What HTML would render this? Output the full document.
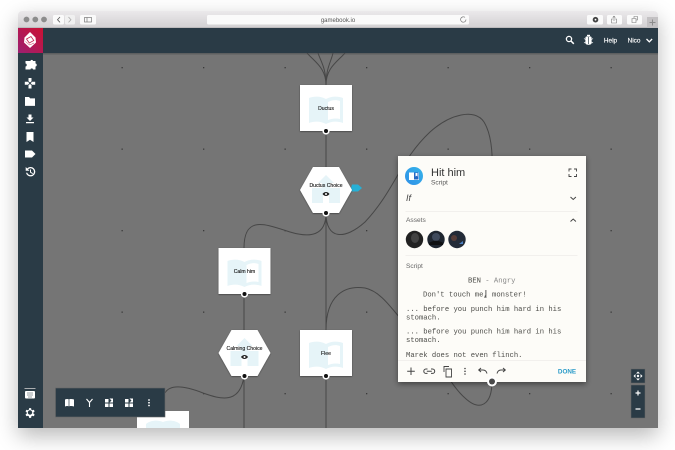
<!DOCTYPE html>
<html><head><meta charset="utf-8"><style>
html,body{margin:0;padding:0;background:#fff;width:675px;height:450px;overflow:hidden}
#win{position:absolute;left:18px;top:11px;width:640px;height:417px;border-radius:4px;box-shadow:0 8px 22px rgba(0,0,0,.28)}
svg{position:absolute;left:0;top:0}
text{font-family:"Liberation Sans",sans-serif}
.m{font-family:"Liberation Mono",monospace;font-size:7.2px;fill:#4c4c48}
.n{font-size:5.100px;text-anchor:middle;fill:#111;stroke:#111;stroke-width:.12px}
</style></head><body>
<div id="win"></div>
<svg width="675" height="450" viewBox="0 0 675 450">
<defs>
<linearGradient id="tb" x1="0" y1="0" x2="0" y2="1"><stop offset="0" stop-color="#ebe9eb"/><stop offset="1" stop-color="#d2d0d2"/></linearGradient>
<linearGradient id="lg" x1="0" y1="1" x2="1" y2="0"><stop offset="0" stop-color="#9c2072"/><stop offset="1" stop-color="#cc1133"/></linearGradient>
<linearGradient id="bl" x1="0" y1="1" x2="1" y2="0"><stop offset="0" stop-color="#2f8fe6"/><stop offset="1" stop-color="#35b4ea"/></linearGradient>
<filter id="ps" x="-20%" y="-20%" width="140%" height="140%"><feDropShadow dx="0" dy="2" stdDeviation="3" flood-color="#000" flood-opacity=".45"/></filter>
<filter id="ns" x="-20%" y="-20%" width="140%" height="140%"><feDropShadow dx="0" dy="0.6" stdDeviation="0.7" flood-color="#000" flood-opacity=".5"/></filter>
<clipPath id="w"><path d="M18 15a4 4 0 0 1 4-4h632a4 4 0 0 1 4 4v413H18z"/></clipPath>
<clipPath id="c"><rect x="43" y="53" width="615" height="375"/></clipPath>
<g id="book"><path d="M-17-11c5-2 12-2 17 1 5-3 12-3 17-1V14c-5-2-12-2-17 1-5-3-12-3-17-1z" fill="#e6f4f8"/><path d="M2-7c4-2 8-2.500 12-1V10c-4-1-8-.5-12 1z" fill="#fff"/></g>
<g id="fork" fill="#e6f4f8"><path d="M0-15l8 8H4v5h10v15H3V4H-3v9h-11V-2H-4v-5h-4z"/></g>
<g id="eye"><path d="M-3.500 0c1.800-2.600 5.200-2.600 7 0-1.800 2.600-5.200 2.600-7 0z" fill="#222"/><circle r="1" fill="#fff"/></g>
<g id="port"><circle r="3.600" fill="#fff"/><circle r="2" fill="#111"/></g>
</defs>

<g clip-path="url(#w)">
<rect x="18" y="11" width="640" height="17" fill="url(#tb)"/>
<rect x="18" y="27" width="640" height="1" fill="#bdbbbd"/>
<circle cx="26.500" cy="19.500" r="2.900" fill="#8c8c8c"/><circle cx="35.300" cy="19.500" r="2.900" fill="#8c8c8c"/><circle cx="44" cy="19.500" r="2.900" fill="#8c8c8c"/>
<rect x="53" y="15" width="11" height="9.500" rx="1.500" fill="#fafafa"/><rect x="65" y="15" width="10" height="9.500" rx="1.500" fill="#f0f0f0"/>
<path d="M60 17l-2.500 2.700 2.500 2.700" fill="none" stroke="#555" stroke-width=".8"/><path d="M68.500 17l2.500 2.700-2.500 2.700" fill="none" stroke="#aaa" stroke-width=".8"/>
<rect x="80" y="15" width="16" height="9.500" rx="1.500" fill="#fafafa"/><rect x="84.500" y="17.500" width="7" height="4.500" fill="none" stroke="#777" stroke-width=".7"/><path d="M87 17.500v4.500" stroke="#777" stroke-width=".7"/>
<rect x="207" y="15" width="262" height="9.500" rx="1.500" fill="#fafafa"/>
<text x="338" y="22" font-size="6" text-anchor="middle" fill="#555">gamebook.io</text>
<path d="M466 19.500a2.700 2.700 0 1 1-1-2.100" fill="none" stroke="#777" stroke-width=".7"/>
<rect x="587" y="15" width="16" height="9.500" rx="1.500" fill="#fafafa"/><circle cx="595.500" cy="19.700" r="2.800" fill="#444"/><circle cx="595.500" cy="19.700" r=".9" fill="#fff"/>
<rect x="607" y="15" width="15" height="9.500" rx="1.500" fill="#fafafa"/><path d="M613 19h-1.500v4h5v-4H615M614 21v-4.500M612.700 17.500l1.300-1.300 1.300 1.300" fill="none" stroke="#777" stroke-width=".6"/>
<rect x="627" y="15" width="15" height="9.500" rx="1.500" fill="#fafafa"/><path d="M632 18.500h4v4h-4zM634 18.500v-2h3.500v3.500h-1.500" fill="none" stroke="#777" stroke-width=".6"/>
<rect x="647" y="17" width="11" height="10.500" fill="#c3c1c3"/><path d="M652.500 19.500v6M649.500 22.500h6" stroke="#8b8b8b" stroke-width="1"/>

<rect x="43" y="53" width="615" height="375" fill="#757575"/>
<rect x="43" y="53" width="615" height="1.500" fill="#5d5f60"/>
<g fill="#3a3a3a">
<rect x="121.500" y="67" width="1.300" height="1.300"/><rect x="203" y="67" width="1.300" height="1.300"/><rect x="284.500" y="67" width="1.300" height="1.300"/><rect x="366" y="67" width="1.300" height="1.300"/><rect x="447.500" y="67" width="1.300" height="1.300"/><rect x="529" y="67" width="1.300" height="1.300"/><rect x="610.500" y="67" width="1.300" height="1.300"/>
<rect x="121.500" y="148.500" width="1.300" height="1.300"/><rect x="203" y="148.500" width="1.300" height="1.300"/><rect x="284.500" y="148.500" width="1.300" height="1.300"/><rect x="366" y="148.500" width="1.300" height="1.300"/><rect x="447.500" y="148.500" width="1.300" height="1.300"/><rect x="529" y="148.500" width="1.300" height="1.300"/><rect x="610.500" y="148.500" width="1.300" height="1.300"/>
<rect x="121.500" y="230" width="1.300" height="1.300"/><rect x="203" y="230" width="1.300" height="1.300"/><rect x="284.500" y="230" width="1.300" height="1.300"/><rect x="366" y="230" width="1.300" height="1.300"/><rect x="610.500" y="230" width="1.300" height="1.300"/>
<rect x="121.500" y="311.500" width="1.300" height="1.300"/><rect x="203" y="311.500" width="1.300" height="1.300"/><rect x="284.500" y="311.500" width="1.300" height="1.300"/><rect x="366" y="311.500" width="1.300" height="1.300"/><rect x="610.500" y="311.500" width="1.300" height="1.300"/>
<rect x="121.500" y="393" width="1.300" height="1.300"/><rect x="203" y="393" width="1.300" height="1.300"/><rect x="284.500" y="393" width="1.300" height="1.300"/><rect x="366" y="393" width="1.300" height="1.300"/><rect x="447.500" y="393" width="1.300" height="1.300"/><rect x="529" y="393" width="1.300" height="1.300"/><rect x="610.500" y="393" width="1.300" height="1.300"/>
</g>

<g clip-path="url(#c)" fill="none" stroke="#474747" stroke-width="1">
<path d="M326 85C326 68 315 62 307 53M326 85C326 68 321 62 318 53M326 85C326 68 331 62 333 53M326 85C326 68 337 62 345 53"/>
<path d="M326 131V167M326 213V330M326 376V428"/>
<path d="M244 248C244 215 265 224 290 232C310 238 326 236 326 213"/>
<path d="M326 213C326 240 345 240 365 222C395 190 400 160 430 132C450 114 475 108 484 122C495 140 492 170 492 200V381"/>
<path d="M326 330C326 295 345 285 365 288C385 292 398 320 420 340C440 360 450 385 465 398C480 412 492 405 492 381"/>
<path d="M244 294V330M244 376V428"/>
<path d="M165 393C170 384 185 386 203 393C220 399 240 405 244 376"/>
</g>

<g filter="url(#ns)"><rect x="300" y="85" width="52" height="46" fill="#fff"/></g>
<use href="#book" x="326" y="109"/>
<text class="n" x="326" y="110">Ductus</text>
<use href="#port" x="326" y="131"/>

<path d="M352 184.500h6l4 3.500-4 3.500h-8z" fill="#26b0d6"/>
<g filter="url(#ns)"><path d="M300 190L313 167H339L352 190L339 213H313z" fill="#fff"/></g>
<use href="#fork" x="326" y="190"/>
<text class="n" x="326" y="187">Ductus Choice</text>
<use href="#eye" x="326" y="194"/>
<use href="#port" x="326" y="213"/>

<g filter="url(#ns)"><rect x="218.500" y="248" width="52" height="46" fill="#fff"/></g>
<use href="#book" x="244.500" y="272"/>
<text class="n" x="244.500" y="273">Calm him</text>
<use href="#port" x="244.500" y="294"/>

<g filter="url(#ns)"><path d="M218.500 353L231.500 330H257.500L270.500 353L257.500 376H231.500z" fill="#fff"/></g>
<use href="#fork" x="244.500" y="353"/>
<text class="n" x="244.500" y="350">Calming Choice</text>
<use href="#eye" x="244.500" y="357"/>
<use href="#port" x="244.500" y="376"/>

<g filter="url(#ns)"><rect x="300" y="330" width="52" height="46" fill="#fff"/></g>
<use href="#book" x="326" y="354"/>
<text class="n" x="326" y="355">Flee</text>
<use href="#port" x="326" y="376"/>

<rect x="137" y="411" width="52" height="20" fill="#fff"/>
<path d="M146 424c5-4 12-4 17-2 5-2 12-2 17 2v4h-34z" fill="#e6f4f8"/>

<rect x="18" y="28" width="640" height="25" fill="#2a3b46"/>
<rect x="18" y="53" width="25" height="375" fill="#2a3b46"/>
<rect x="18" y="28" width="25" height="25" fill="url(#lg)"/>
<path d="M30 32l5.500 5.500.5 5-6 5.500-6-5.500.5-5z" fill="#fff"/>
<path d="M26.500 39l4.500-2.500 2.800 4-4.500 2.500z" fill="none" stroke="#c3254f" stroke-width=".8"/>
<path d="M25.500 41.500l4 3.500 4.500-2" fill="none" stroke="#c3254f" stroke-width=".5"/>

<g fill="#fff">
<path d="M28 61h2.500c0-1.500 2.500-1.500 2.500 0h2.500v2.500c1.700 0 1.700 3 0 3V69.500h-2.500c0-1.500-2.500-1.500-2.500 0H25.500v-3c1.700 0 1.700-3 0-3V61z"/>
<path d="M28.500 78h3v3.200l-1.500 1.300-1.500-1.300zM28.500 88.500h3v-3.200l-1.500-1.300-1.500 1.300zM24.800 81.700h3.200l1.300 1.500-1.300 1.500h-3.200zM35.200 81.700h-3.200l-1.300 1.500 1.300 1.500h3.200z"/>
<path d="M25 97h4l1.200 1.400H35v7.500H25z"/>
<path d="M28.500 114.500h3v3h2l-3.500 3.500-3.500-3.500h2zM26 122h8v1.300h-8z"/>
<path d="M26.500 132h7v10l-3.500-2.200-3.500 2.200z"/>
<path d="M25 150.500h7l3.500 3.500-3.500 3.500h-7z"/>
<path d="M30.500 167a4.700 4.700 0 1 1-4.500 5.700h1.300a3.400 3.400 0 1 0 3.200-4.400c-1 0-1.800.5-2.400 1.100l1.400 1.400h-3.800v-3.800l1.500 1.500c.9-.9 2-1.500 3.300-1.500zM30 169.500h1v2.500l2 1.200-.5.8-2.500-1.500z"/>
<rect x="24.500" y="388" width="11" height=".8" fill="#ccc"/>
<rect x="25" y="391" width="10" height="7.500" rx="1"/>
<path d="M33.500 412.300l1.200-.9-1-1.700-1.400.5-1-.6-.2-1.500h-2l-.2 1.500-1 .6-1.400-.5-1 1.700 1.200.9v1.400l-1.200.9 1 1.700 1.400-.5 1 .6.2 1.500h2l.2-1.500 1-.6 1.400.5 1-1.700-1.200-.9zM30 414.700a2.200 2.200 0 1 1 0-4.400 2.200 2.200 0 0 1 0 4.400z"/>
</g>
<path d="M27 393h6M27 395h6M28 397h4" stroke="#2a3b46" stroke-width=".6"/>

<g fill="none" stroke="#fff" stroke-width="1.300"><circle cx="569" cy="39" r="2.600"/><path d="M571 41l2.800 2.800" stroke-width="1.500"/></g>
<path d="M586 36.500h5l.6 1v5.500c0 1-1 1.800-3.100 1.800s-3.100-.8-3.100-1.800v-5.500z" fill="#fff"/><path d="M588.500 37v7" stroke="#2a3b46" stroke-width=".7"/><rect x="587" y="34.800" width="3" height="1.400" fill="#fff"/><path d="M584 38.500l1.500 1M593 38.500l-1.500 1M584 43l1.500-1M593 43l-1.500-1" stroke="#fff" stroke-width=".7"/>
<text x="610.500" y="42.500" font-size="6.400" text-anchor="middle" fill="#fff" stroke="#fff" stroke-width=".15">Help</text>
<text x="634" y="42.500" font-size="6.400" text-anchor="middle" fill="#fff" stroke="#fff" stroke-width=".15">Nico</text>
<path d="M646.500 39l2.800 2.800 2.800-2.800" fill="none" stroke="#fff" stroke-width="1.300"/>

<rect x="55.500" y="388" width="109.500" height="29" fill="#2a3b46" stroke="#666" stroke-width=".6"/>
<path d="M65 399.500c1.500-.7 3-.7 4 0 1-.7 3-.7 5 0v7c-2-.7-4-.7-5 0-1-.7-2.500-.7-4 0z" fill="#fff"/><path d="M69 399.500v7" stroke="#2a3b46" stroke-width=".7"/>
<path d="M86.500 399l3 3.500v4.500M92.500 399l-3 3.500" fill="none" stroke="#fff" stroke-width="1.100"/>
<path d="M105 399h3.500v3.500H105zM105 403.500h3.500v3.500H105zM109.500 403.500h3.500v3.500h-3.500zM109.500 398.500l2 2-2 2h3.500v-4z" fill="#fff"/>
<path d="M125 399h3.500v3.500H125zM125 403.500h3.500v3.500H125zM129.500 403.500h3.500v3.500h-3.500zM129.500 398.500l2 2-2 2h3.500v-4z" fill="#fff"/>
<g fill="#fff"><circle cx="149" cy="400" r=".9"/><circle cx="149" cy="402.800" r=".9"/><circle cx="149" cy="405.500" r=".9"/></g>

<g filter="url(#ps)"><rect x="398" y="156" width="188" height="226" fill="#fdfcf8"/></g>
<circle cx="414" cy="176" r="9" fill="url(#bl)"/>
<path d="M409 172.500h10v7.500h-10z" fill="#fff"/><path d="M414 172.500h4.500v7H414z" fill="#2467c4"/><path d="M415.500 173v3.500l1-.7 1 .7V173z" fill="#fff"/>
<text x="431" y="176" font-size="11" fill="#333">Hit him</text>
<text x="431" y="184.500" font-size="6.600" fill="#555">Script</text>
<path d="M569 171.500v-2.500h2.500M574 169h2.500v2.500M576.500 174v2.500H574M571.500 176.500H569V174" fill="none" stroke="#444" stroke-width=".9"/>
<text x="406" y="201" font-size="9" font-style="italic" fill="#444">If</text>
<path d="M570.500 197l2.700 2.500 2.700-2.500" fill="none" stroke="#444" stroke-width="1"/>
<rect x="405.500" y="211" width="172" height=".7" fill="#eeece8"/>
<text x="406" y="222" font-size="6.600" fill="#666">Assets</text>
<path d="M570.500 221.500l2.700-2.500 2.700 2.500" fill="none" stroke="#444" stroke-width="1"/>
<circle cx="414.500" cy="239.500" r="8.700" fill="#222"/><ellipse cx="415" cy="238" rx="4" ry="5" fill="#424242"/>
<circle cx="436" cy="239.500" r="8.700" fill="#1f2630"/><ellipse cx="436" cy="237" rx="4" ry="4" fill="#3f4a5c"/><path d="M429 243c4-3 10-3 14 0v2h-14z" fill="#0f1012"/>
<circle cx="457" cy="239.500" r="8.700" fill="#232b38"/><circle cx="454" cy="238" r="3" fill="#553c38"/><path d="M459 244l4-3v3z" fill="#4a7ec0"/>
<rect x="405.500" y="255" width="172" height=".7" fill="#eeece8"/>
<text x="406" y="268" font-size="6.600" fill="#666">Script</text>
<text class="m" x="468" y="282.500">BEN <tspan fill="#888">- Angry</tspan></text>
<text class="m" x="423" y="296.500">Don't touch me, monster!</text>
<rect x="485.500" y="290" width=".8" height="8" fill="#333"/>
<text class="m" x="406" y="311">... before you punch him hard in his</text>
<text class="m" x="406" y="319.500">stomach.</text>
<text class="m" x="406" y="333.500">... before you punch him hard in his</text>
<text class="m" x="406" y="342">stomach.</text>
<text class="m" x="406" y="357">Marek does not even flinch.</text>
<rect x="398" y="360" width="188" height=".7" fill="#eeece8"/>
<path d="M411 367.500v7.500M407.200 371.200h7.600" stroke="#444" stroke-width="1" fill="none"/>
<path d="M427.500 369h-1.500a2.200 2.200 0 0 0 0 4.400h1.500M431 369h1.500a2.200 2.200 0 0 1 0 4.400H431M426.800 371.200h5" fill="none" stroke="#444" stroke-width="1"/>
<path d="M444 372v-5.500h5M446 369h5.500v8H446z" fill="none" stroke="#444" stroke-width=".9"/>
<g fill="#444"><circle cx="465" cy="368.500" r=".8"/><circle cx="465" cy="371.300" r=".8"/><circle cx="465" cy="374" r=".8"/></g>
<path d="M479 370h4c2.500 0 3.500 1.500 4 3.500M481 368l-2.300 2 2.300 2" fill="none" stroke="#444" stroke-width="1"/>
<path d="M505 370h-4c-2.500 0-3.500 1.500-4 3.500M503 368l2.300 2-2.300 2" fill="none" stroke="#444" stroke-width="1"/>
<text x="567" y="373.300" font-size="6.300" font-weight="bold" text-anchor="middle" fill="#2a9bc8">DONE</text>
<circle cx="492" cy="381.500" r="5" fill="#fff"/><circle cx="492" cy="381.500" r="3" fill="#4a4a4a"/>

<rect x="631" y="369" width="14" height="14" fill="#2a3b46" stroke="#666" stroke-width=".5"/>
<path d="M638 371.500l2 2h-4zM638 380.500l2-2h-4zM633.500 376l2-2v4zM642.500 376l-2-2v4z" fill="#fff"/><circle cx="638" cy="376" r="1.200" fill="#fff"/>
<rect x="631" y="385" width="14" height="33" fill="#2a3b46" stroke="#666" stroke-width=".5"/>
<path d="M638 390.500v5M635.500 393h5M635.500 409h5" stroke="#fff" stroke-width="1.200"/>
</g>
</svg>
</body></html>
